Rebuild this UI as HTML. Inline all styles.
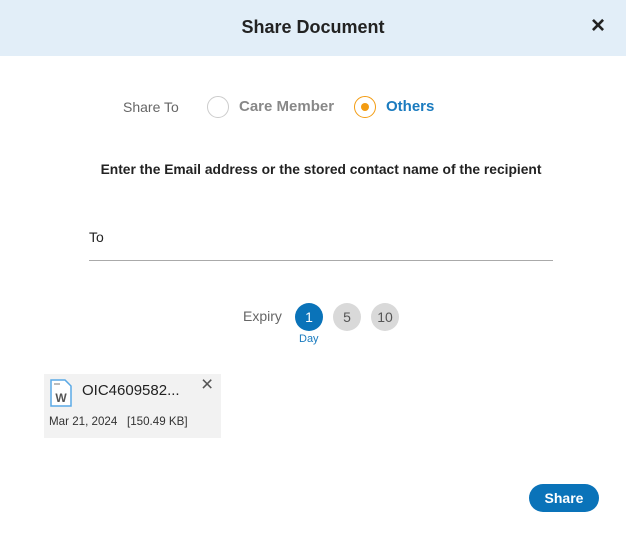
<!DOCTYPE html>
<html><head><style>
*{margin:0;padding:0;box-sizing:border-box}
body{width:626px;height:537px;background:#fff;font-family:"Liberation Sans",sans-serif;position:relative;overflow:hidden}
.hdr{position:absolute;left:0;top:0;width:626px;height:56px;background:#e2eef8}
.t{position:absolute;white-space:nowrap}
.circ{position:absolute;border-radius:50%}
</style></head><body>
<div class="hdr"></div>
<div class="t" style="left:0;width:626px;text-align:center;top:17px;font-size:18px;font-weight:bold;color:#222">Share Document</div>
<div class="t" style="left:591px;top:12px;font-size:24px;font-weight:bold;color:#222">×</div>

<div class="t" style="left:123px;top:99px;font-size:14px;color:#666">Share To</div>
<div class="circ" style="left:207px;top:96px;width:22px;height:22px;border:1px solid #ccc"></div>
<div class="t" style="left:239px;top:98px;font-size:15px;font-weight:bold;color:#888">Care Member</div>
<div class="circ" style="left:354px;top:96px;width:22px;height:22px;border:1px solid #f39c12"></div>
<div class="circ" style="left:361px;top:103px;width:8px;height:8px;background:#f39c12"></div>
<div class="t" style="left:386px;top:98px;font-size:15px;font-weight:bold;color:#1a7bbf">Others</div>

<div class="t" style="left:0;width:642px;text-align:center;top:162px;font-size:13.8px;font-weight:bold;color:#222">Enter the Email address or the stored contact name of the recipient</div>

<div class="t" style="left:89px;top:229px;font-size:14px;color:#222">To</div>
<div style="position:absolute;left:89px;top:260px;width:464px;height:1px;background:#aaa"></div>

<div class="t" style="left:243px;top:308px;font-size:14px;color:#666">Expiry</div>
<div class="circ" style="left:295px;top:303px;width:28px;height:28px;background:#0a73b9;color:#fff;font-size:14px;text-align:center;line-height:28px">1</div>
<div class="circ" style="left:333px;top:303px;width:28px;height:28px;background:#d9d9d9;color:#555;font-size:14px;text-align:center;line-height:28px">5</div>
<div class="circ" style="left:371px;top:303px;width:28px;height:28px;background:#d9d9d9;color:#555;font-size:14px;text-align:center;line-height:28px">10</div>
<div class="t" style="left:299px;top:333px;font-size:11px;color:#1a7bbf">Day</div>

<div style="position:absolute;left:44px;top:374px;width:177px;height:64px;background:#f2f2f2"></div>
<svg style="position:absolute;left:50px;top:379px" width="22" height="28" viewBox="0 0 22 28"><path d="M1 1H15L21 7V27H1Z" fill="#fff" stroke="#5aa9e6" stroke-width="1.5"/><text x="11" y="23" font-size="12" font-weight="bold" fill="#555" text-anchor="middle" font-family="Liberation Sans">W</text><rect x="4" y="4" width="6" height="2" fill="#bbb"/></svg>
<div class="t" style="left:82px;top:382px;font-size:15px;color:#222">OIC4609582...</div>
<div class="t" style="left:201px;top:373px;font-size:21px;color:#555">×</div>
<div class="t" style="left:49px;top:415px;font-size:11.6px;color:#333">Mar 21, 2024 &nbsp; [150.49 KB]</div>

<div style="position:absolute;left:529px;top:484px;width:70px;height:28px;border-radius:14px;background:#0a73b9;color:#fff;font-size:14px;font-weight:bold;text-align:center;line-height:28px">Share</div>
</body></html>
